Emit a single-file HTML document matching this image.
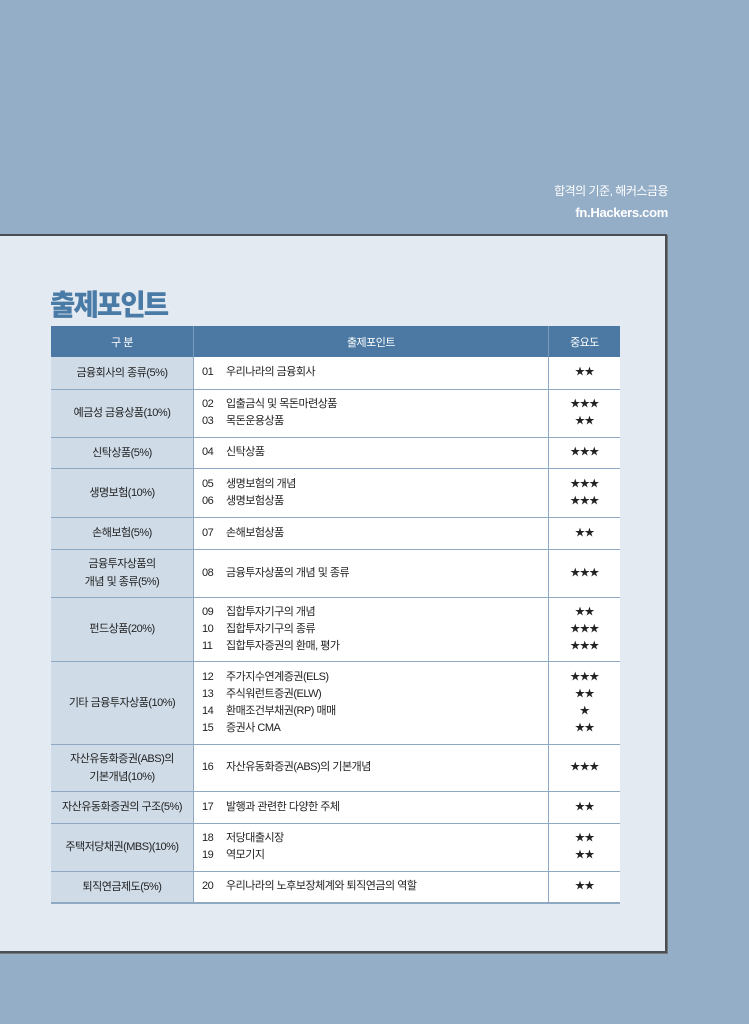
<!DOCTYPE html><html><head><meta charset="utf-8"><style>
body{margin:0;width:749px;height:1024px;background:#94aec8;position:relative;overflow:hidden;font-family:"Liberation Sans","Noto Sans CJK KR",sans-serif}
.tag{position:absolute;right:81px;top:180px;color:#fff;font-size:12px;text-align:right;line-height:22px;letter-spacing:-0.5px}
.tag b{font-size:13px;letter-spacing:-0.3px}
.panel{position:absolute;left:-2px;top:234px;width:667px;height:715px;background:#e3eaf2;border:2px solid #4a4e55;border-left:none;box-shadow:1px 1px 0 #777}
h1{position:absolute;left:50px;top:282px;margin:0;font-size:29px;color:#4a7ba6;font-weight:900;letter-spacing:-2px;transform:scaleX(0.95);transform-origin:left}
table{position:absolute;left:51px;top:326px;width:569px;border-collapse:collapse;font-size:11px;color:#222;letter-spacing:-0.5px}
td,th{border-bottom:1px solid #8fa9c2;padding:0}
th{background:#4b79a3;color:#fff;font-weight:normal;height:31px;border-bottom:none;border-left:1px solid #7a9bbb}
td.c{background:#cfdbe7;text-align:center;width:142px;line-height:18px}
td.m{background:#fff;border-left:1px solid #8fa9c2;padding-left:8px;line-height:17px;width:346px}
td.s{background:#fff;border-left:1px solid #8fa9c2;text-align:center;line-height:17px;font-size:10px}
tr:last-child td{border-bottom:2px solid #8fa9c2}
.n{display:inline-block;width:24px}
</style></head><body>
<div class="tag">합격의 기준, 해커스금융<br><b>fn.Hackers.com</b></div>
<div class="panel"></div>
<h1>출제포인트</h1>
<table>
<tr><th style="border-left:none">구 분</th><th>출제포인트</th><th>중요도</th></tr>
<tr style="height:32px"><td class="c">금융회사의 종류(5%)</td><td class="m"><span class="n">01</span>우리나라의 금융회사</td><td class="s">★★</td></tr>
<tr style="height:48px"><td class="c">예금성 금융상품(10%)</td><td class="m"><span class="n">02</span>입출금식 및 목돈마련상품<br><span class="n">03</span>목돈운용상품</td><td class="s">★★★<br>★★</td></tr>
<tr style="height:31px"><td class="c">신탁상품(5%)</td><td class="m"><span class="n">04</span>신탁상품</td><td class="s">★★★</td></tr>
<tr style="height:49px"><td class="c">생명보험(10%)</td><td class="m"><span class="n">05</span>생명보험의 개념<br><span class="n">06</span>생명보험상품</td><td class="s">★★★<br>★★★</td></tr>
<tr style="height:32px"><td class="c">손해보험(5%)</td><td class="m"><span class="n">07</span>손해보험상품</td><td class="s">★★</td></tr>
<tr style="height:48px"><td class="c">금융투자상품의<br>개념 및 종류(5%)</td><td class="m"><span class="n">08</span>금융투자상품의 개념 및 종류</td><td class="s">★★★</td></tr>
<tr style="height:64px"><td class="c">펀드상품(20%)</td><td class="m"><span class="n">09</span>집합투자기구의 개념<br><span class="n">10</span>집합투자기구의 종류<br><span class="n">11</span>집합투자증권의 환매, 평가</td><td class="s">★★<br>★★★<br>★★★</td></tr>
<tr style="height:83px"><td class="c">기타 금융투자상품(10%)</td><td class="m"><span class="n">12</span>주가지수연계증권(ELS)<br><span class="n">13</span>주식워런트증권(ELW)<br><span class="n">14</span>환매조건부채권(RP) 매매<br><span class="n">15</span>증권사 CMA</td><td class="s">★★★<br>★★<br>★<br>★★</td></tr>
<tr style="height:47px"><td class="c">자산유동화증권(ABS)의<br>기본개념(10%)</td><td class="m"><span class="n">16</span>자산유동화증권(ABS)의 기본개념</td><td class="s">★★★</td></tr>
<tr style="height:32px"><td class="c">자산유동화증권의 구조(5%)</td><td class="m"><span class="n">17</span>발행과 관련한 다양한 주체</td><td class="s">★★</td></tr>
<tr style="height:48px"><td class="c">주택저당채권(MBS)(10%)</td><td class="m"><span class="n">18</span>저당대출시장<br><span class="n">19</span>역모기지</td><td class="s">★★<br>★★</td></tr>
<tr style="height:32px"><td class="c">퇴직연금제도(5%)</td><td class="m"><span class="n">20</span>우리나라의 노후보장체계와 퇴직연금의 역할</td><td class="s">★★</td></tr>
</table>
</body></html>
